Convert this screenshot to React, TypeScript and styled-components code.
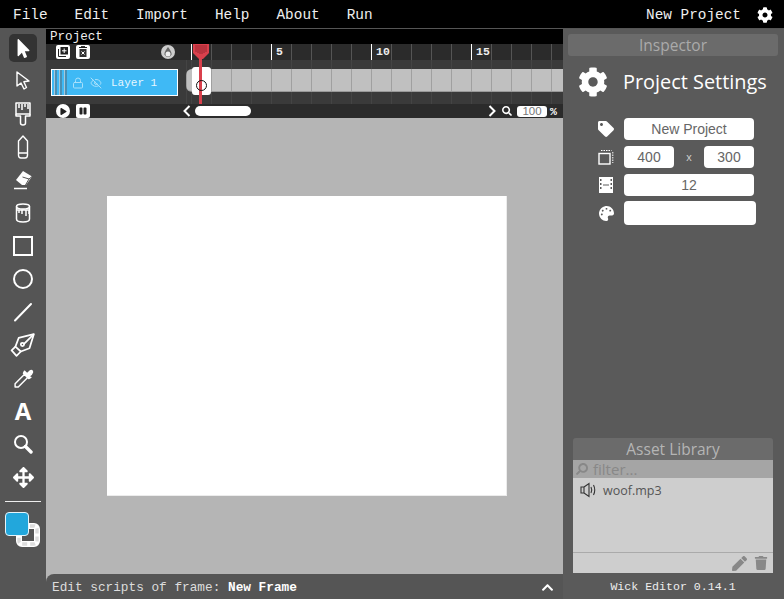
import React from "react";
import styled, { createGlobalStyle } from "styled-components";
import { FaCog, FaTag, FaSearch, FaArrowsAlt, FaMousePointer, FaPen, FaChevronUp, FaPlay, FaPause, FaTrash, FaPalette } from "react-icons/fa";
import { Lock, EyeOff } from "lucide-react";

const mono = `"Liberation Mono", "DejaVu Sans Mono", monospace`;
const sans = `"Open Sans", "Noto Sans", sans-serif`;

const GlobalStyle = createGlobalStyle`
  html, body { margin: 0; padding: 0; height: 100%; background: #555; overflow: hidden; }
  #root { height: 100%; }
  * { box-sizing: border-box; }
`;

const Editor = styled.div`
  display: grid;
  grid-template-columns: 46px 517px 221px;
  grid-template-rows: 29px 570px;
  width: 784px;
  height: 599px;
`;

const MenuBar = styled.div`
  grid-column: 1 / 4;
  display: flex;
  align-items: center;
  background: #000;
  border-bottom: 1px solid #555;
  padding: 1px 11px 0 13px;
  font: 14.4px ${mono};
  color: #eee;
`;

const MenuItem = styled.span`
  margin-right: 27px;
`;

const ProjectName = styled.span`
  margin-left: auto;
  margin-right: 16px;
`;

const Toolbar = styled.div`
  background: #555;
  display: flex;
  flex-direction: column;
  align-items: center;
  padding-top: 5px;
`;

const ToolButton = styled.div<{ $active?: boolean }>`
  width: 28px;
  height: 28px;
  margin-bottom: 5px;
  border-radius: 5px;
  display: flex;
  align-items: center;
  justify-content: center;
  color: #fff;
  background: ${(p) => (p.$active ? "#333" : "transparent")};
`;

const TextTool = styled.span`
  font: bold 24px/28px ${sans};
`;

const ToolDivider = styled.div`
  width: 36px;
  height: 1px;
  background: #eee;
  margin: 5px 0 10px;
`;

const Swatches = styled.div`
  position: relative;
  width: 36px;
  height: 36px;
`;

const FillSwatch = styled.div`
  position: absolute;
  left: 0;
  top: 0;
  width: 24px;
  height: 24px;
  border-radius: 4px;
  background: #22a7dc;
  border: 1px solid #e6f4fa;
  z-index: 1;
`;

const StrokeSwatch = styled.svg`
  position: absolute;
  left: 11px;
  top: 11px;
`;

const Center = styled.div`
  display: flex;
  flex-direction: column;
  min-width: 0;
  background: #b5b5b5;
`;

const Breadcrumb = styled.div`
  height: 15px;
  background: #000;
  color: #eee;
  font: 12.6px/17px ${mono};
  padding-left: 4px;
`;

const Timeline = styled.div`
  position: relative;
  display: grid;
  grid-template-columns: 140px 1fr;
  grid-template-rows: 16px 44px 14px;
  height: 74px;
  overflow: hidden;
`;

const TimelineTools = styled.div`
  background: #2b2b2b;
  display: flex;
  align-items: center;
  padding-left: 10px;
  gap: 6px;
  color: #fff;
`;

const OnionSlot = styled.span`
  display: flex;
  margin-left: 65px;
`;

const Ruler = styled.div`
  background: #2b2b2b;
  padding-left: 5px;
  display: flex;
`;

const RulerCell = styled.div<{ $major?: boolean }>`
  flex: 0 0 20px;
  height: 100%;
  border-left: 1px solid ${(p) => (p.$major ? "#fff" : "#555")};
  color: #eee;
  font: bold 11.5px/15px ${mono};
  padding-left: 4px;
  white-space: nowrap;
`;

const LayerCol = styled.div`
  background: #3a3a3a;
  padding: 9px 0 0 5px;
`;

const LayerBox = styled.div`
  width: 127px;
  height: 27px;
  background: #3fb9f5;
  border: 1px solid #fff;
  display: flex;
  align-items: center;
  color: #a8e0fb;
  font: 11px ${mono};
`;

const Grip = styled.div`
  width: 15px;
  height: 100%;
  margin-right: 5px;
  background: repeating-linear-gradient(90deg, #3fb9f5 0 2px, #a5c8da 2px 3px, #4a8fb3 3px 5px);
`;

const LayerName = styled.span`
  margin-left: 9px;
  color: #e6f7ff;
`;

const FramesCol = styled.div`
  position: relative;
  background: repeating-linear-gradient(90deg, #444 0 1px, #3a3a3a 1px 20px);
  background-position: 5px 0;
  padding-top: 9px;
`;

const FrameRow = styled.div`
  height: 23px;
  border-radius: 6px 0 0 6px;
  background: repeating-linear-gradient(90deg, #c0c0c0 0 19px, #a0a0a0 19px 20px);
  background-position: 6px 0;
  border-bottom: 1px solid #999;
`;

const SelectedFrame = styled.div`
  position: absolute;
  left: 6px;
  top: 7px;
  width: 19px;
  height: 28px;
  background: #fff;
  border-radius: 3px;
`;

const FrameDot = styled.div`
  position: absolute;
  left: 4px;
  top: 13px;
  width: 11px;
  height: 11px;
  border-radius: 50%;
  border: 1.5px solid #111;
  z-index: 3;
`;

const Playback = styled.div`
  background: #2b2b2b;
  display: flex;
  align-items: center;
  padding-left: 10px;
  gap: 6px;
  color: #fff;
`;

const PlayButton = styled.div`
  width: 14px;
  height: 14px;
  border-radius: 50%;
  background: #fff;
  color: #222;
  display: flex;
  align-items: center;
  justify-content: center;
`;

const PauseButton = styled.div`
  width: 14px;
  height: 14px;
  border-radius: 2px;
  background: #fff;
  color: #222;
  display: flex;
  align-items: center;
  justify-content: center;
`;

const ScrollTrack = styled.div`
  background: #2b2b2b;
  display: flex;
  align-items: center;
  color: #fff;
`;

const ScrollBack = styled.span`
  display: flex;
  margin-left: -3px;
`;

const ScrollThumb = styled.div`
  width: 56px;
  height: 10px;
  border-radius: 5px;
  background: #fff;
  margin: 0 237px 0 4px;
`;

const TrackMagnifier = styled.span`
  display: flex;
  margin-left: 6px;
`;

const ZoomBox = styled.div`
  margin-left: 5px;
  width: 30px;
  height: 11px;
  background: #fff;
  border-radius: 3px;
  color: #777;
  font: 11.5px/11px "Liberation Sans", sans-serif;
  text-align: center;
`;

const Percent = styled.span`
  font: bold 11.5px ${mono};
  margin-left: 3px;
`;

const Playhead = styled.div`
  position: absolute;
  left: 153px;
  top: 0;
  width: 3px;
  height: 60px;
  background: #d9404c;
  z-index: 2;
`;

const PlayheadCap = styled.svg`
  position: absolute;
  left: 147px;
  top: 0;
  z-index: 2;
`;

const Stage = styled.div`
  flex: 1;
  display: flex;
  align-items: center;
  justify-content: center;
  padding: 0 0 1px 5px;
`;

const Paper = styled.div`
  width: 400px;
  height: 300px;
  background: #fff;
  border-right: 1px solid #ececec;
  border-bottom: 1px solid #ececec;
`;

const ScriptBar = styled.div`
  height: 25px;
  background: #555;
  border-radius: 8px 0 0 0;
  display: flex;
  align-items: center;
  justify-content: space-between;
  padding: 2px 9px 0 6px;
  color: #ddd;
  font: 12.75px ${mono};
  b { color: #fff; }
`;

const Side = styled.div`
  background: #5a5a5a;
  display: flex;
  flex-direction: column;
  padding: 5px 6px 0 5px;
`;

const SideTitle = styled.div`
  height: 22px;
  border-radius: 3px;
  background: #6b6b6b;
  color: #aaa;
  text-align: center;
  font: 15.5px/22px ${sans};
`;

const SettingsHead = styled.div`
  display: flex;
  align-items: center;
  gap: 15px;
  padding: 11px 0 0 10px;
  color: #fff;
  font: 19.9px/30px ${sans};
`;

const Fields = styled.div`
  display: flex;
  flex-direction: column;
  gap: 6px;
  margin: 21px 0 0 23px;
`;

const FieldRow = styled.div`
  display: flex;
  align-items: center;
  height: 22px;
  color: #fff;
`;

const FieldIcon = styled.div`
  width: 33px;
  display: flex;
  align-items: center;
  justify-content: center;
  padding-right: 3px;
`;

const Field = styled.div<{ $w: number; $h?: number }>`
  width: ${(p) => p.$w}px;
  height: ${(p) => p.$h ?? 22}px;
  background: #fff;
  border-radius: 4px;
  color: #666;
  text-align: center;
  font: 14px/22px "Liberation Sans", sans-serif;
`;

const Times = styled.span`
  width: 30px;
  text-align: center;
  color: #ccc;
  font: 11px "Liberation Sans", sans-serif;
`;

const AssetLibrary = styled.div`
  margin: auto 5px 0 5px;
  display: flex;
  flex-direction: column;
  height: 135px;
`;

const AssetTitle = styled(SideTitle)`
  color: #b5b5b5;
  border-radius: 3px 3px 0 0;
  flex: none;
  font-size: 15.5px;
`;

const Filter = styled.div`
  height: 18px;
  background: #a5a5a5;
  color: #888;
  display: flex;
  align-items: center;
  gap: 5px;
  padding-left: 3px;
  font: 15px ${sans};
`;

const AssetList = styled.div`
  flex: 1;
  background: #cecece;
  padding: 4px 7px;
  display: flex;
  align-items: flex-start;
  gap: 5px;
  color: #555;
  font: 12.5px/18px ${sans};
`;

const AssetFooter = styled.div`
  height: 21px;
  background: #cecece;
  border-top: 1px solid #aaa;
  display: flex;
  align-items: center;
  justify-content: flex-end;
  gap: 7px;
  padding-right: 5px;
  color: #888;
`;

const Version = styled.div`
  height: 26px;
  text-align: center;
  color: #eee;
  font: 11.6px/28px ${mono};
`;

const IconCursorOutline = () => (
  <svg width="18" height="20" viewBox="0 0 18 20" fill="none" stroke="#fff" strokeWidth="1.4" strokeLinejoin="round">
    <path d="M3 1 L3 15 L7 12 L10 18 L12.5 16.5 L9.8 10.8 L15 10 Z" />
  </svg>
);

const IconBrush = () => (
  <svg width="18" height="24" viewBox="0 0 18 24" fill="none" stroke="#fff" strokeWidth="1.5" strokeLinejoin="round">
    <path d="M2 1 H16 V12 H2 Z M5 2 V6 M8 2 V8 M11 2 V5 M14 2 V7" />
    <path d="M2 12 V14 H6.5 V21 Q6.5 23 9 23 Q11.5 23 11.5 21 V14 H16 V12" />
  </svg>
);

const IconPencil = () => (
  <svg width="12" height="24" viewBox="0 0 12 24" fill="none" stroke="#fff" strokeWidth="1.4" strokeLinejoin="round">
    <path d="M6 1 L10.5 6 V20 Q10.5 23 8 23 H4 Q1.5 23 1.5 20 V6 Z M1.5 18 H10.5" />
  </svg>
);

const IconEraser = () => (
  <svg width="22" height="20" viewBox="0 0 22 20">
    <path d="M11 1 L20 6.5 L14 15 H10 L4 10 Z" fill="#fff" />
    <path d="M13.5 15 L17 9 L20 6.5 M10.5 7 L17 9" fill="none" stroke="#555" />
    <path d="M2 18.5 H15" stroke="#fff" strokeWidth="1.5" />
  </svg>
);

const IconBucket = () => (
  <svg width="16" height="20" viewBox="0 0 16 20" fill="none" stroke="#fff" strokeWidth="1.5">
    <ellipse cx="8" cy="3.5" rx="6.5" ry="2.5" />
    <path d="M1.5 3.5 V16 Q1.5 19 8 19 Q14.5 19 14.5 16 V3.5" />
    <path d="M2 7 H14 V11 M11 7 V13 M7 7 V11 M4 7 V10" />
  </svg>
);

const IconRect = () => (
  <svg width="20" height="20" viewBox="0 0 20 20" fill="none" stroke="#fff" strokeWidth="2">
    <rect x="1" y="1" width="18" height="18" />
  </svg>
);

const IconCircle = () => (
  <svg width="20" height="20" viewBox="0 0 20 20" fill="none" stroke="#fff" strokeWidth="2">
    <circle cx="10" cy="10" r="9" />
  </svg>
);

const IconLine = () => (
  <svg width="20" height="20" viewBox="0 0 20 20" fill="none" stroke="#fff" strokeWidth="2" strokeLinecap="round">
    <path d="M2 18.5 L18 2" />
  </svg>
);

const IconPenTool = () => (
  <svg width="26" height="24" viewBox="0 0 24 22" fill="none" stroke="#fff" strokeWidth="1.6" strokeLinejoin="round">
    <path d="M22 1 L8 4.5 L5 12.5 L10 17 L18 14 Z" />
    <path d="M22 1 L12.5 10.5" />
    <circle cx="11.5" cy="10.5" r="1.5" />
    <path d="M5 12.5 L1.5 16 L6 21 L10 17" />
  </svg>
);

const IconDropper = () => (
  <svg width="21" height="21" viewBox="0 0 20 20" fill="none" stroke="#fff" strokeWidth="1.4" strokeLinejoin="round">
    <path d="M11 6 L14 9 L5 18 L2 18 L2 15 Z" />
    <path d="M11 3 L17 9 L15 10 L10 5 Z M13.5 5.5 L16 3 Q17.5 2 18.5 3 Q19 4 17.5 6 L15.5 7.5" fill="#fff" />
  </svg>
);

const IconMagnifier = () => (
  <svg width="20" height="20" viewBox="0 0 20 20" fill="none" stroke="#fff">
    <circle cx="8" cy="8" r="6" strokeWidth="2" />
    <path d="M12.5 12.5 L18 18" strokeWidth="3.4" strokeLinecap="round" />
  </svg>
);

const IconNewLayer = () => (
  <svg width="14" height="14" viewBox="0 0 14 14">
    <rect width="14" height="14" rx="2" fill="#fff" />
    <path d="M2.5 4 V11.5 H10" fill="none" stroke="#222" />
    <rect x="4.5" y="2" width="7.5" height="7.5" fill="#222" />
    <path d="M8.2 3.5 V8 M6 5.8 H10.5" stroke="#fff" />
  </svg>
);

const IconDeleteLayer = () => (
  <svg width="14" height="14" viewBox="0 0 14 14">
    <rect width="14" height="14" rx="2" fill="#fff" />
    <path d="M3 2.5 H11 M5 1.6 H9" stroke="#222" />
    <rect x="3.5" y="4" width="7" height="8" fill="#333" />
    <path d="M5.5 6.5 L8.5 9.5 M8.5 6.5 L5.5 9.5" stroke="#fff" />
  </svg>
);

const IconOnion = () => (
  <svg width="14" height="14" viewBox="0 0 14 14">
    <circle cx="7" cy="7" r="7" fill="#ccc" />
    <path d="M7 2 Q11 7 10.5 9.5 Q9 12 7 12 Q5 12 3.5 9.5 Q3 7 7 2 Z" fill="#666" />
    <circle cx="7" cy="9" r="2.5" fill="#eee" />
  </svg>
);

const IconCanvasSize = () => (
  <svg width="16" height="16" viewBox="0 0 16 16" fill="none" stroke="#fff">
    <rect x="1" y="4.5" width="11" height="10.5" strokeWidth="1.4" />
    <path d="M3 1.5 H13.5 M14.8 3 V14" strokeDasharray="1.5 1" />
  </svg>
);

const IconFilmStrip = () => (
  <svg width="14" height="16" viewBox="0 0 14 16">
    <path
      fillRule="evenodd"
      fill="#fff"
      d="M0 0 H14 V16 H0 Z M1 2 V4 H2.5 V2 Z M1 6 V8 H2.5 V6 Z M1 10 V12 H2.5 V10 Z M11.5 2 V4 H13 V2 Z M11.5 6 V8 H13 V6 Z M11.5 10 V12 H13 V10 Z M4 7.5 H10 V8.5 H4 Z"
    />
  </svg>
);

const IconSpeaker = () => (
  <svg width="18" height="16" viewBox="0 0 18 16" fill="none" stroke="#333" strokeWidth="1.1">
    <path d="M1 5 H4 V11 H1 Z M4 5 L9 1.5 V14.5 L4 11" />
    <path d="M11 5 Q12.5 8 11 11 M13.5 3 Q16 8 13.5 13" />
  </svg>
);

const IconChevron = ({ dir }: { dir: "left" | "right" }) => (
  <svg width="8" height="12" viewBox="0 0 8 12" fill="none" stroke="#fff" strokeWidth="2">
    <path d={dir === "left" ? "M6.5 1 L1.5 6 L6.5 11" : "M1.5 1 L6.5 6 L1.5 11"} />
  </svg>
);

const FRAMES = Array.from({ length: 19 }, (_, i) => i + 1);

export default function App() {
  return (
    <Editor>
      <GlobalStyle />
      <MenuBar>
        <MenuItem>File</MenuItem>
        <MenuItem>Edit</MenuItem>
        <MenuItem>Import</MenuItem>
        <MenuItem>Help</MenuItem>
        <MenuItem>About</MenuItem>
        <MenuItem>Run</MenuItem>
        <ProjectName>New Project</ProjectName>
        <FaCog size={16} color="#fff" />
      </MenuBar>

      <Toolbar>
        <ToolButton $active><FaMousePointer size={19} /></ToolButton>
        <ToolButton><IconCursorOutline /></ToolButton>
        <ToolButton><IconBrush /></ToolButton>
        <ToolButton><IconPencil /></ToolButton>
        <ToolButton><IconEraser /></ToolButton>
        <ToolButton><IconBucket /></ToolButton>
        <ToolButton><IconRect /></ToolButton>
        <ToolButton><IconCircle /></ToolButton>
        <ToolButton><IconLine /></ToolButton>
        <ToolButton><IconPenTool /></ToolButton>
        <ToolButton><IconDropper /></ToolButton>
        <ToolButton><TextTool>A</TextTool></ToolButton>
        <ToolButton><IconMagnifier /></ToolButton>
        <ToolButton><FaArrowsAlt size={21} /></ToolButton>
        <ToolDivider />
        <Swatches>
          <FillSwatch />
          <StrokeSwatch width="24" height="24" viewBox="0 0 24 24" fill="none">
            <rect x="3" y="3" width="18" height="18" rx="3" stroke="#fff" strokeWidth="6" />
            <rect x="3" y="3" width="18" height="18" rx="3" stroke="#ddd" strokeWidth="3.4" strokeDasharray="5 3" />
          </StrokeSwatch>
        </Swatches>
      </Toolbar>

      <Center>
        <Breadcrumb>Project</Breadcrumb>
        <Timeline>
          <TimelineTools>
            <IconNewLayer />
            <IconDeleteLayer />
            <OnionSlot><IconOnion /></OnionSlot>
          </TimelineTools>
          <Ruler>
            {FRAMES.map((n) => (
              <RulerCell key={n} $major={n === 1 || n % 5 === 0}>
                {n % 5 === 0 ? n : ""}
              </RulerCell>
            ))}
          </Ruler>
          <LayerCol>
            <LayerBox>
              <Grip />
              <Lock size={12} />
              <EyeOff size={12} style={{ marginLeft: 6 }} />
              <LayerName>Layer 1</LayerName>
            </LayerBox>
          </LayerCol>
          <FramesCol>
            <FrameRow />
            <SelectedFrame><FrameDot /></SelectedFrame>
          </FramesCol>
          <Playback>
            <PlayButton><FaPlay size={7} /></PlayButton>
            <PauseButton><FaPause size={8} /></PauseButton>
          </Playback>
          <ScrollTrack>
            <ScrollBack><IconChevron dir="left" /></ScrollBack>
            <ScrollThumb />
            <IconChevron dir="right" />
            <TrackMagnifier><FaSearch size={10} /></TrackMagnifier>
            <ZoomBox>100</ZoomBox>
            <Percent>%</Percent>
          </ScrollTrack>
          <Playhead />
          <PlayheadCap width="16" height="16" viewBox="0 0 16 16">
            <path d="M0 0 H16 V9 L10 15 H6 L0 9 Z" fill="#d9404c" />
            <path d="M3 1 V8 M5 1 V9 M7 1 V10 M9 1 V10 M11 1 V9 M13 1 V8" stroke="#9a2730" />
          </PlayheadCap>
        </Timeline>
        <Stage><Paper /></Stage>
        <ScriptBar>
          <span>Edit scripts of frame: <b>New Frame</b></span>
          <FaChevronUp size={13} color="#fff" />
        </ScriptBar>
      </Center>

      <Side>
        <SideTitle>Inspector</SideTitle>
        <SettingsHead>
          <FaCog size={30} />
          Project Settings
        </SettingsHead>
        <Fields>
          <FieldRow>
            <FieldIcon><FaTag size={16} /></FieldIcon>
            <Field $w={130}>New Project</Field>
          </FieldRow>
          <FieldRow>
            <FieldIcon><IconCanvasSize /></FieldIcon>
            <Field $w={50}>400</Field>
            <Times>x</Times>
            <Field $w={50}>300</Field>
          </FieldRow>
          <FieldRow>
            <FieldIcon><IconFilmStrip /></FieldIcon>
            <Field $w={130}>12</Field>
          </FieldRow>
          <FieldRow>
            <FieldIcon><FaPalette size={15} /></FieldIcon>
            <Field $w={132} $h={24} />
          </FieldRow>
        </Fields>
        <AssetLibrary>
          <AssetTitle>Asset Library</AssetTitle>
          <Filter>
            <FaSearch size={12} color="#888" style={{ transform: "scaleX(-1)" }} />
            filter...
          </Filter>
          <AssetList>
            <IconSpeaker />
            woof.mp3
          </AssetList>
          <AssetFooter>
            <FaPen size={15} />
            <FaTrash size={14} />
          </AssetFooter>
        </AssetLibrary>
        <Version>Wick Editor 0.14.1</Version>
      </Side>
    </Editor>
  );
}
